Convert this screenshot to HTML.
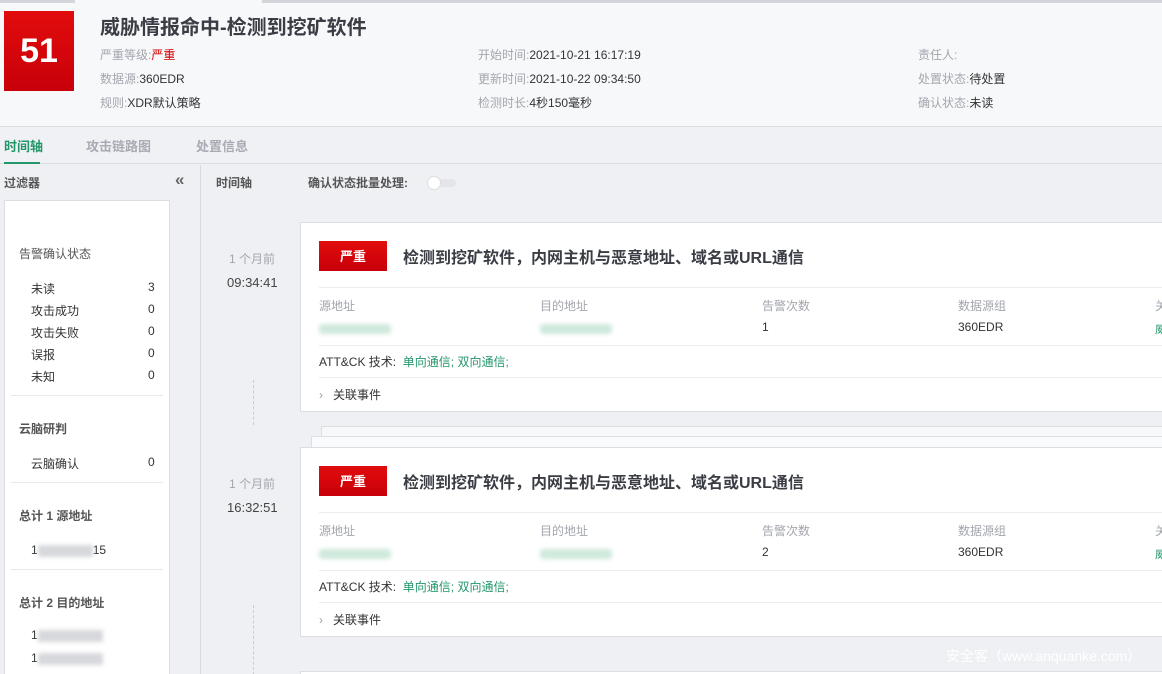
<!DOCTYPE html>
<html style="overflow:hidden;height:674px"><head><meta charset="utf-8"><style>
*{margin:0;padding:0;box-sizing:border-box}
body{width:1162px;height:674px;overflow:hidden;background:#eef0f4;font-family:"Liberation Sans","Noto Sans CJK SC",sans-serif;position:relative;color:#333;font-size:12px}
.a{position:absolute;white-space:nowrap}
.g{color:#a3a6ad}
.card{position:absolute;left:300px;width:880px;background:#fff;border:1px solid #dcdee3}
.blur{display:inline-block;height:10px;background:#cfe9dc;filter:blur(2px);border-radius:3px}
.blurg{display:inline-block;height:12px;background:#d6d8dc;filter:blur(2px)}
</style></head><body>
<div class="a" style="left:0;top:0;width:1162px;height:127px;background:#f7f8fa;border-bottom:1px solid #dcdde2"></div>
<div class="a" style="left:0;top:0;width:75px;height:3px;background:#d4d5db"></div>
<div class="a" style="left:262px;top:0;width:900px;height:3px;background:#d4d5db"></div>
<div class="a" style="left:4px;top:11px;width:70px;height:80px;background:linear-gradient(#e10c0c,#c8000a);color:#fff;font-size:34px;font-weight:bold;text-align:center;line-height:80px">51</div>
<div class="a" style="left:100px;top:11px;font-size:20px;font-weight:bold;color:#3a3d44">威胁情报命中-检测到挖矿软件</div>
<div class="a" style="left:100px;top:46px"><span class="g">严重等级:</span><span style="color:#d40000">严重</span></div>
<div class="a" style="left:100px;top:70px"><span class="g">数据源:</span>360EDR</div>
<div class="a" style="left:100px;top:94px"><span class="g">规则:</span>XDR默认策略</div>
<div class="a" style="left:478px;top:46px"><span class="g">开始时间:</span>2021-10-21 16:17:19</div>
<div class="a" style="left:478px;top:70px"><span class="g">更新时间:</span>2021-10-22 09:34:50</div>
<div class="a" style="left:478px;top:94px"><span class="g">检测时长:</span>4秒150毫秒</div>
<div class="a" style="left:918px;top:46px"><span class="g">责任人:</span></div>
<div class="a" style="left:918px;top:70px"><span class="g">处置状态:</span>待处置</div>
<div class="a" style="left:918px;top:94px"><span class="g">确认状态:</span>未读</div>
<div class="a" style="left:0;top:127px;width:1162px;height:37px;background:#f0f1f5;border-bottom:1px solid #dcdde2"></div>
<div class="a" style="left:4px;top:136px;font-size:13px;font-weight:bold;color:#23966a">时间轴</div>
<div class="a" style="left:4px;top:162px;width:36px;height:2px;background:#23966a"></div>
<div class="a" style="left:86px;top:136px;font-size:13px;font-weight:bold;color:#a8abb3">攻击链路图</div>
<div class="a" style="left:196px;top:136px;font-size:13px;font-weight:bold;color:#a8abb3">处置信息</div>
<div class="a" style="left:200px;top:165px;width:1px;height:509px;background:#d9dbe0"></div>
<div class="a" style="left:4px;top:174px;font-weight:bold;color:#555">过滤器</div>
<div class="a" style="left:175px;top:170px;font-size:17px;font-weight:bold;color:#666">«</div>
<div class="a" style="left:4px;top:200px;width:166px;height:480px;background:#fff;border:1px solid #dcdee3"></div>
<div class="a" style="left:19px;top:245px;color:#555">告警确认状态</div>
<div class="a" style="left:31px;top:280px">未读</div><div class="a" style="left:148px;top:280px">3</div>
<div class="a" style="left:31px;top:302px">攻击成功</div><div class="a" style="left:148px;top:302px">0</div>
<div class="a" style="left:31px;top:324px">攻击失败</div><div class="a" style="left:148px;top:324px">0</div>
<div class="a" style="left:31px;top:346px">误报</div><div class="a" style="left:148px;top:346px">0</div>
<div class="a" style="left:31px;top:368px">未知</div><div class="a" style="left:148px;top:368px">0</div>
<div class="a" style="left:11px;top:395px;width:152px;height:1px;background:#e8e9ed"></div>
<div class="a" style="left:19px;top:420px;color:#555;font-weight:bold">云脑研判</div>
<div class="a" style="left:31px;top:455px">云脑确认</div><div class="a" style="left:148px;top:455px">0</div>
<div class="a" style="left:11px;top:482px;width:152px;height:1px;background:#e8e9ed"></div>
<div class="a" style="left:19px;top:507px;color:#555;font-weight:bold">总计 1 源地址</div>
<div class="a" style="left:31px;top:543px">1<span class="blurg" style="width:55px;vertical-align:middle"></span>15</div>
<div class="a" style="left:11px;top:569px;width:152px;height:1px;background:#e8e9ed"></div>
<div class="a" style="left:19px;top:594px;color:#555;font-weight:bold">总计 2 目的地址</div>
<div class="a" style="left:31px;top:628px">1<span class="blurg" style="width:65px;vertical-align:middle"></span></div>
<div class="a" style="left:31px;top:651px">1<span class="blurg" style="width:65px;vertical-align:middle"></span></div>
<div class="a" style="left:216px;top:174px;font-weight:bold;color:#555">时间轴</div>
<div class="a" style="left:308px;top:174px;font-weight:bold;color:#555">确认状态批量处理:</div>
<div class="a" style="left:430px;top:179px;width:26px;height:8px;border-radius:4px;background:#e4e5e9"></div>
<div class="a" style="left:427px;top:176px;width:14px;height:14px;border-radius:7px;background:#fff;border:1px solid #ddd"></div>
<div class="a" style="left:253px;top:380px;height:45px;border-left:1px dashed #ccc"></div>
<div class="a" style="left:253px;top:605px;height:70px;border-left:1px dashed #ccc"></div>
<div class="a" style="left:229px;top:250px;color:#a3a6ad">1 个月前</div>
<div class="a" style="left:227px;top:275px;font-size:13px;color:#444">09:34:41</div>
<div class="a" style="left:229px;top:475px;color:#a3a6ad">1 个月前</div>
<div class="a" style="left:227px;top:500px;font-size:13px;color:#444">16:32:51</div>
<div class="a" style="left:321px;top:426px;width:860px;height:30px;background:#f7f8fa;border:1px solid #dcdee3"></div>
<div class="a" style="left:311px;top:436px;width:870px;height:30px;background:#fafbfc;border:1px solid #dcdee3"></div>
<div class="card" style="top:222px;height:190px"></div>
<div class="card" style="top:447px;height:190px"></div>
<div class="card" style="top:671px;height:10px"></div>
<div class="a" style="left:319px;top:241px;width:68px;height:30px;background:linear-gradient(#e10c0c,#c8000a);color:#fff;font-weight:bold;font-size:13px;text-align:center;line-height:31px">严重</div>
<div class="a" style="left:403px;top:244px;font-size:16px;font-weight:bold;color:#3a3d44">检测到挖矿软件，内网主机与恶意地址、域名或URL通信</div>
<div class="a" style="left:319px;top:287px;width:843px;height:1px;background:#ebecef"></div>
<div class="a g" style="left:319px;top:297px">源地址</div><div class="a g" style="left:540px;top:297px">目的地址</div><div class="a g" style="left:762px;top:297px">告警次数</div><div class="a g" style="left:958px;top:297px">数据源组</div><div class="a g" style="left:1155px;top:297px">关</div>
<div class="a" style="left:319px;top:323px"><span class="blur" style="width:72px"></span></div>
<div class="a" style="left:540px;top:323px"><span class="blur" style="width:72px"></span></div>
<div class="a" style="left:762px;top:320px">1</div><div class="a" style="left:958px;top:320px">360EDR</div><div class="a" style="left:1155px;top:320px;color:#23966a">威</div>
<div class="a" style="left:319px;top:345px;width:843px;height:1px;background:#ebecef"></div>
<div class="a" style="left:319px;top:353px">ATT&amp;CK 技术: <span style="color:#23966a">&nbsp;单向通信; 双向通信;</span></div>
<div class="a" style="left:319px;top:377px;width:843px;height:1px;background:#ebecef"></div>
<div class="a" style="left:319px;top:386px"><span style="color:#999">›</span>&nbsp;&nbsp;&nbsp;关联事件</div>
<div class="a" style="left:319px;top:466px;width:68px;height:30px;background:linear-gradient(#e10c0c,#c8000a);color:#fff;font-weight:bold;font-size:13px;text-align:center;line-height:31px">严重</div>
<div class="a" style="left:403px;top:469px;font-size:16px;font-weight:bold;color:#3a3d44">检测到挖矿软件，内网主机与恶意地址、域名或URL通信</div>
<div class="a" style="left:319px;top:512px;width:843px;height:1px;background:#ebecef"></div>
<div class="a g" style="left:319px;top:522px">源地址</div><div class="a g" style="left:540px;top:522px">目的地址</div><div class="a g" style="left:762px;top:522px">告警次数</div><div class="a g" style="left:958px;top:522px">数据源组</div><div class="a g" style="left:1155px;top:522px">关</div>
<div class="a" style="left:319px;top:548px"><span class="blur" style="width:72px"></span></div>
<div class="a" style="left:540px;top:548px"><span class="blur" style="width:72px"></span></div>
<div class="a" style="left:762px;top:545px">2</div><div class="a" style="left:958px;top:545px">360EDR</div><div class="a" style="left:1155px;top:545px;color:#23966a">威</div>
<div class="a" style="left:319px;top:570px;width:843px;height:1px;background:#ebecef"></div>
<div class="a" style="left:319px;top:578px">ATT&amp;CK 技术: <span style="color:#23966a">&nbsp;单向通信; 双向通信;</span></div>
<div class="a" style="left:319px;top:602px;width:843px;height:1px;background:#ebecef"></div>
<div class="a" style="left:319px;top:611px"><span style="color:#999">›</span>&nbsp;&nbsp;&nbsp;关联事件</div>
<div class="a" style="left:946px;top:646px;font-size:14px;color:#fff">安全客（www.anquanke.com）</div>
</body></html>
